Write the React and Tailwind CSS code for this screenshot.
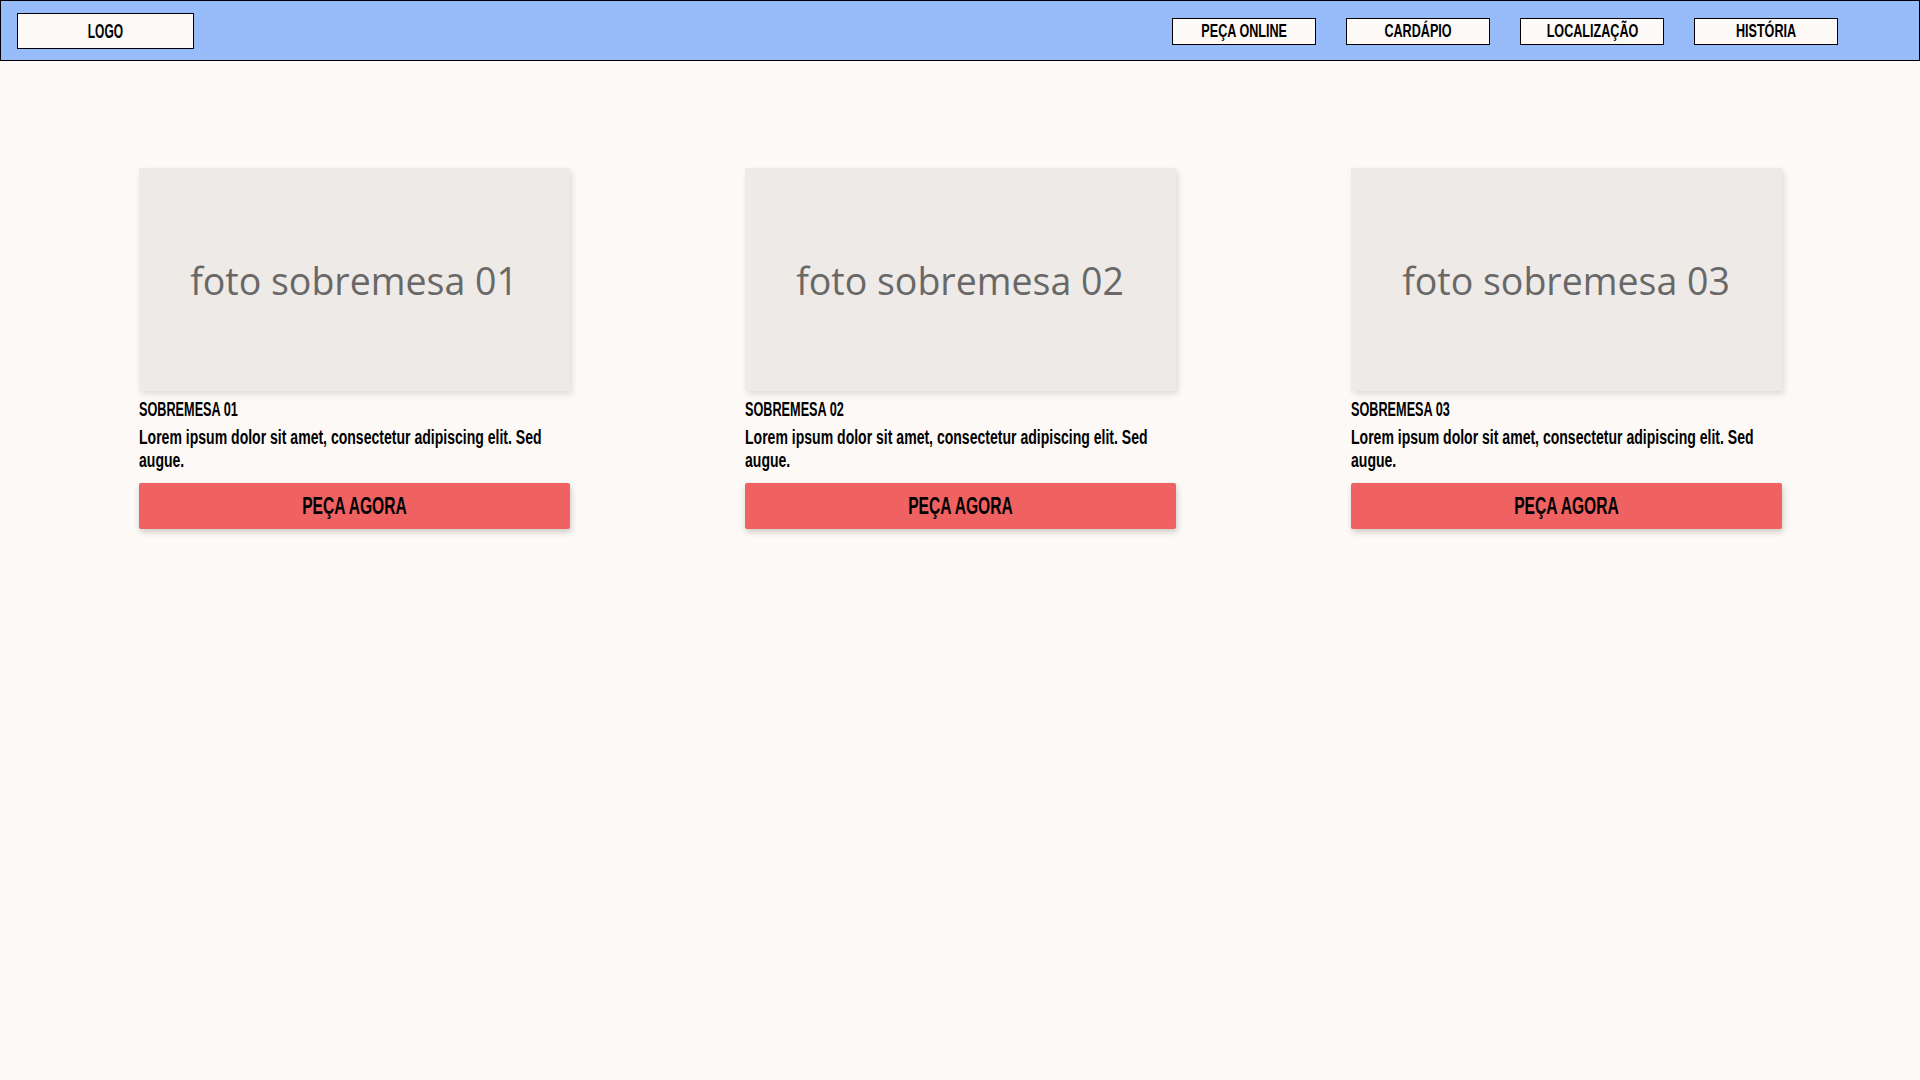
import React from "react";

// fonte condensada não existe aqui: Liberation Sans Bold achatada com scale-x
const SANS = { fontFamily: '"Liberation Sans", Arial, sans-serif' };

const NAV = ["PEÇA ONLINE", "CARDÁPIO", "LOCALIZAÇÃO", "HISTÓRIA"];

const SOBREMESAS = [
  { id: "01", foto: "foto sobremesa 01" },
  { id: "02", foto: "foto sobremesa 02" },
  { id: "03", foto: "foto sobremesa 03" },
];

function Card({ s }) {
  return (
    <div className="w-[431px] flex flex-col">
      {/* foto */}
      <div className="h-[223px] bg-[#eeeae8] shadow-[2px_3px_6px_rgba(0,0,0,0.12)] flex items-center justify-center pt-[4px]">
        <span className="text-[37.5px] text-[#696867] font-['Open_Sans',sans-serif]">
          {s.foto}
        </span>
      </div>
      <h2 className="mt-[6px] h-[24px] text-[19.5px] leading-[24px] font-bold text-black whitespace-nowrap" style={SANS}>
        <span className="inline-block scale-x-[0.65] origin-left">SOBREMESA {s.id}</span>
      </h2>
      <p className="mt-[5px] w-[598px] text-[19.5px] leading-[23px] font-bold text-black scale-x-[0.72] origin-left" style={SANS}>
        Lorem ipsum dolor sit amet, consectetur adipiscing elit. Sed augue.
      </p>
      <button
        className="mt-[11px] h-[46px] w-full bg-[#f06262] rounded-[2px] shadow-[1px_3px_6px_rgba(0,0,0,0.2)] text-[24px] font-bold text-black flex items-center justify-center"
        style={SANS}
      >
        <span className="inline-block scale-x-[0.65]">PEÇA AGORA</span>
      </button>
    </div>
  );
}

export default function App() {
  return (
    <div className="min-h-screen w-full overflow-hidden bg-[#fcf9f6]">
      {/* Header */}
      <header className="h-[61px] border border-black bg-[#98bbf9] flex items-center justify-between pl-[16px] pr-[81px]">
        <div className="w-[177px] h-[36px] border border-black bg-[#fcf9f6] flex items-center justify-center text-[20px] font-bold" style={SANS}>
          <span className="inline-block scale-x-[0.6]">LOGO</span>
        </div>
        <nav className="flex gap-[30px] pt-px">
          {NAV.map((n) => (
            <div
              key={n}
              className="w-[144px] h-[27px] border border-black bg-[#fcf9f6] flex items-center justify-center text-[18px] font-bold whitespace-nowrap"
              style={SANS}
            >
              <span className="inline-block scale-x-[0.7]">{n}</span>
            </div>
          ))}
        </nav>
      </header>

      {/* Cards */}
      <main className="flex justify-center gap-[175px] pt-[107px]">
        {SOBREMESAS.map((s) => (
          <Card key={s.id} s={s} />
        ))}
      </main>
    </div>
  );
}
